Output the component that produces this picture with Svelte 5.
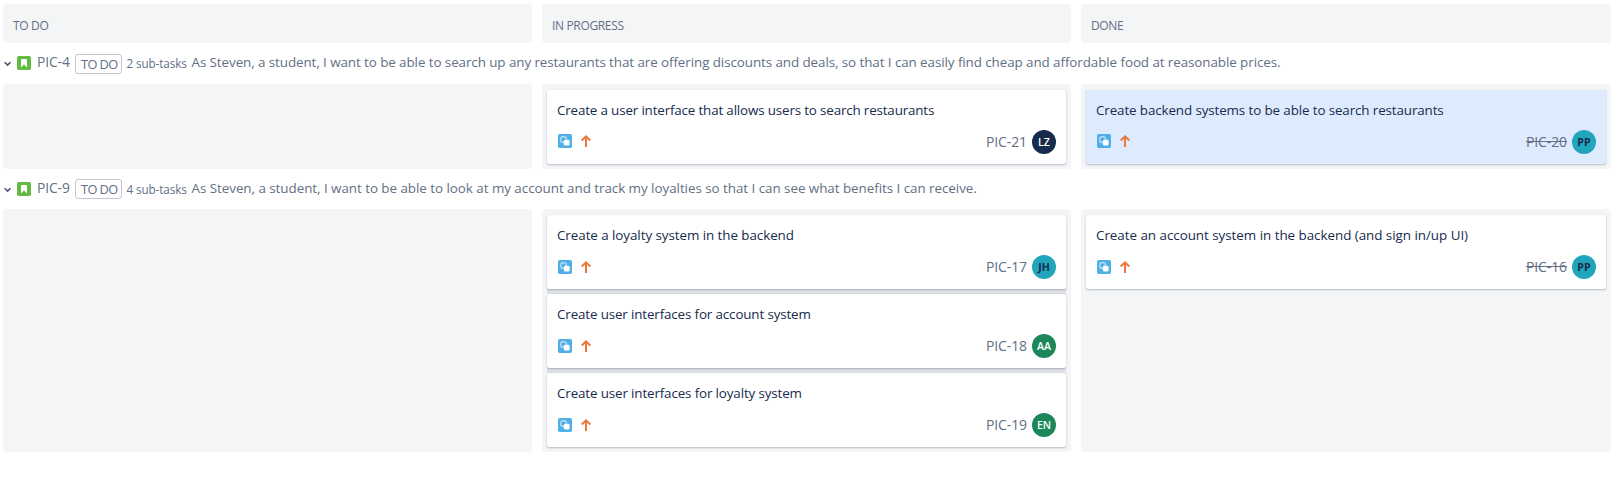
<script>
  const columns = ['TO DO', 'IN PROGRESS', 'DONE'];
  const lanes = [
    {
      key: 'PIC-4',
      status: 'TO DO',
      count: '2 sub-tasks',
      kind: 'first',
      summary:
        'As Steven, a student, I want to be able to search up any restaurants that are offering discounts and deals, so that I can easily find cheap and affordable food at reasonable prices.',
      tracking: -0.075,
      cells: [
        [],
        [{ title: 'Create a user interface that allows users to search restaurants', key: 'PIC-21', who: 'LZ', tone: 'navy', tracking: -0.16 }],
        [{ title: 'Create backend systems to be able to search restaurants', key: 'PIC-20', who: 'PP', tone: 'teal', done: true, selected: true, tracking: -0.115 }]
      ]
    },
    {
      key: 'PIC-9',
      status: 'TO DO',
      count: '4 sub-tasks',
      kind: 'second',
      summary:
        'As Steven, a student, I want to be able to look at my account and track my loyalties so that I can see what benefits I can receive.',
      tracking: -0.037,
      cells: [
        [],
        [
          { title: 'Create a loyalty system in the backend', key: 'PIC-17', who: 'JH', tone: 'teal', tracking: -0.06 },
          { title: 'Create user interfaces for account system', key: 'PIC-18', who: 'AA', tone: 'green', tracking: -0.14 },
          { title: 'Create user interfaces for loyalty system', key: 'PIC-19', who: 'EN', tone: 'green', tracking: -0.137 }
        ],
        [{ title: 'Create an account system in the backend (and sign in/up UI)', key: 'PIC-16', who: 'PP', tone: 'teal', done: true, tracking: -0.03 }]
      ]
    }
  ];
</script>

<main class="board">
  <header class="columns">
    {#each columns as name}
      <h2 class="heading">{name}</h2>
    {/each}
  </header>

  {#each lanes as lane}
    <section class={lane.kind}>
      <div class="lane">
        <svg class="chevron" width="8" height="8" viewBox="0 0 8 8">
          <path d="M.7 2.3 3.6 5.1 6.5 2.3" fill="none" stroke="#42526e" stroke-width="1.5" />
        </svg>
        <svg class="story" width="14" height="14" viewBox="0 0 14 14">
          <rect width="14" height="14" rx="1.8" fill="#65ba43" />
          <path d="M5 3h4a1 1 0 0 1 1 1v6.5a.5.5 0 0 1-.91.27L7.16 8.54a.2.2 0 0 0-.32 0L4.91 10.77A.5.5 0 0 1 4 10.5V4a1 1 0 0 1 1-1z" fill="#fff" />
        </svg>
        <span class="lane-key">{lane.key}</span>
        <span class="status">{lane.status}</span>
        <span class="count">{lane.count}</span>
        <span class="summary" style:letter-spacing="{lane.tracking}px">{lane.summary}</span>
      </div>
      <div class="columns">
        {#each lane.cells as cards}
          <div class="cell">
            <div class="stack">
              {#each cards as card}
                <article class="card" class:selected={card.selected}>
                  <div class="title" style:letter-spacing="{card.tracking}px">{card.title}</div>
                  <div class="foot">
                    <svg class="subtask" width="14" height="14" viewBox="0 0 14 14">
                      <rect width="14" height="14" rx="1.8" fill="#4fafe6" />
                      <rect x="2.8" y="2.8" width="5.4" height="5.4" rx="1.8" fill="none" stroke="#b5dcf5" stroke-width="1.4" />
                      <rect x="5.8" y="5.8" width="5.8" height="5.8" rx="1.5" fill="#fff" />
                    </svg>
                    <svg class="priority" width="10" height="12" viewBox="0 0 10 12">
                      <path d="M5 12V1.8M.7 5.5 5 1.4l4.3 4.1" fill="none" stroke="#e8793a" stroke-width="2" />
                    </svg>
                    <span class="key" class:done={card.done}>{card.key}</span>
                    <span class="avatar {card.tone}">{card.who}</span>
                  </div>
                </article>
              {/each}
            </div>
          </div>
        {/each}
      </div>
    </section>
  {/each}
</main>

<style>
  :global(body) {
    background: #fff;
  }
  .board {
    padding: 4px 12px 0 3px;
    font-family: 'Open Sans', 'Noto Sans', sans-serif;
    font-size: 13.4px;
    color: #626f84;
    white-space: nowrap;
  }
  .columns {
    display: grid;
    grid-template-columns: 529px 529px 530px;
    gap: 10px;
  }
  .heading {
    margin: 0;
    height: 39px;
    box-sizing: border-box;
    padding: 13px 10px 0;
    font-size: 12px;
    font-weight: 400;
    line-height: 17px;
    letter-spacing: -0.34px;
    background: #f4f5f7;
    border-radius: 4px;
  }
  .lane {
    display: flex;
    align-items: flex-start;
    height: 41px;
    line-height: 20px;
  }
  .second .lane {
    height: 40px;
  }
  .chevron {
    margin: 17px 5px 0 1px;
    flex: none;
  }
  .story {
    margin-top: 13px;
    flex: none;
  }
  .lane-key {
    width: 38px;
    margin: 9px 0 0 6px;
    font-size: 13.8px;
    letter-spacing: -0.1px;
  }
  .status {
    box-sizing: border-box;
    width: 47px;
    height: 20px;
    margin-top: 11px;
    padding-left: 5px;
    border: 1px solid #c1c7d0;
    border-radius: 3px;
    font-size: 12.8px;
    line-height: 19px;
    letter-spacing: -0.6px;
  }
  .second .status {
    margin-top: 10px;
  }
  .count {
    width: 65px;
    margin: 10px 0 0 4.5px;
    font-size: 11.7px;
    letter-spacing: -0.1px;
  }
  .summary {
    margin-top: 9px;
  }
  .cell {
    padding: 6px 5px 5px;
    min-height: 85px;
    box-sizing: border-box;
    background: #f4f5f7;
    border-radius: 4px;
  }
  .stack {
    display: grid;
    gap: 5px;
    background: #dfe1e6;
    border-radius: 2px;
  }
  .card {
    height: 74px;
    box-sizing: border-box;
    padding: 10px 10px 0;
    background: #fff;
    border-radius: 2px;
    box-shadow: 0 1px 2px rgba(9, 30, 66, 0.25), 0 0 1px rgba(9, 30, 66, 0.12);
  }
  .selected {
    background: #deebff;
  }
  .title {
    height: 20px;
    line-height: 20px;
    color: #172b4d;
  }
  .foot {
    display: flex;
    align-items: center;
    height: 24px;
    margin-top: 10px;
  }
  .subtask {
    margin: 0 9px 2px 1px;
  }
  .priority {
    margin-bottom: 2px;
  }
  .second .subtask,
  .second .priority {
    margin-bottom: 0;
  }
  .key {
    margin: 0 5px 0 auto;
    font-size: 14px;
    line-height: 20px;
    letter-spacing: -0.1px;
  }
  .done {
    text-decoration: line-through;
  }
  .avatar {
    width: 24px;
    height: 24px;
    border-radius: 50%;
    font-size: 10.6px;
    font-weight: 600;
    line-height: 24px;
    text-align: center;
    color: #fff;
  }
  .navy {
    background: #172b4d;
  }
  .teal {
    background: #20a5ba;
    color: #172b4d;
    font-weight: 700;
  }
  .green {
    background: #1b875b;
  }
</style>
